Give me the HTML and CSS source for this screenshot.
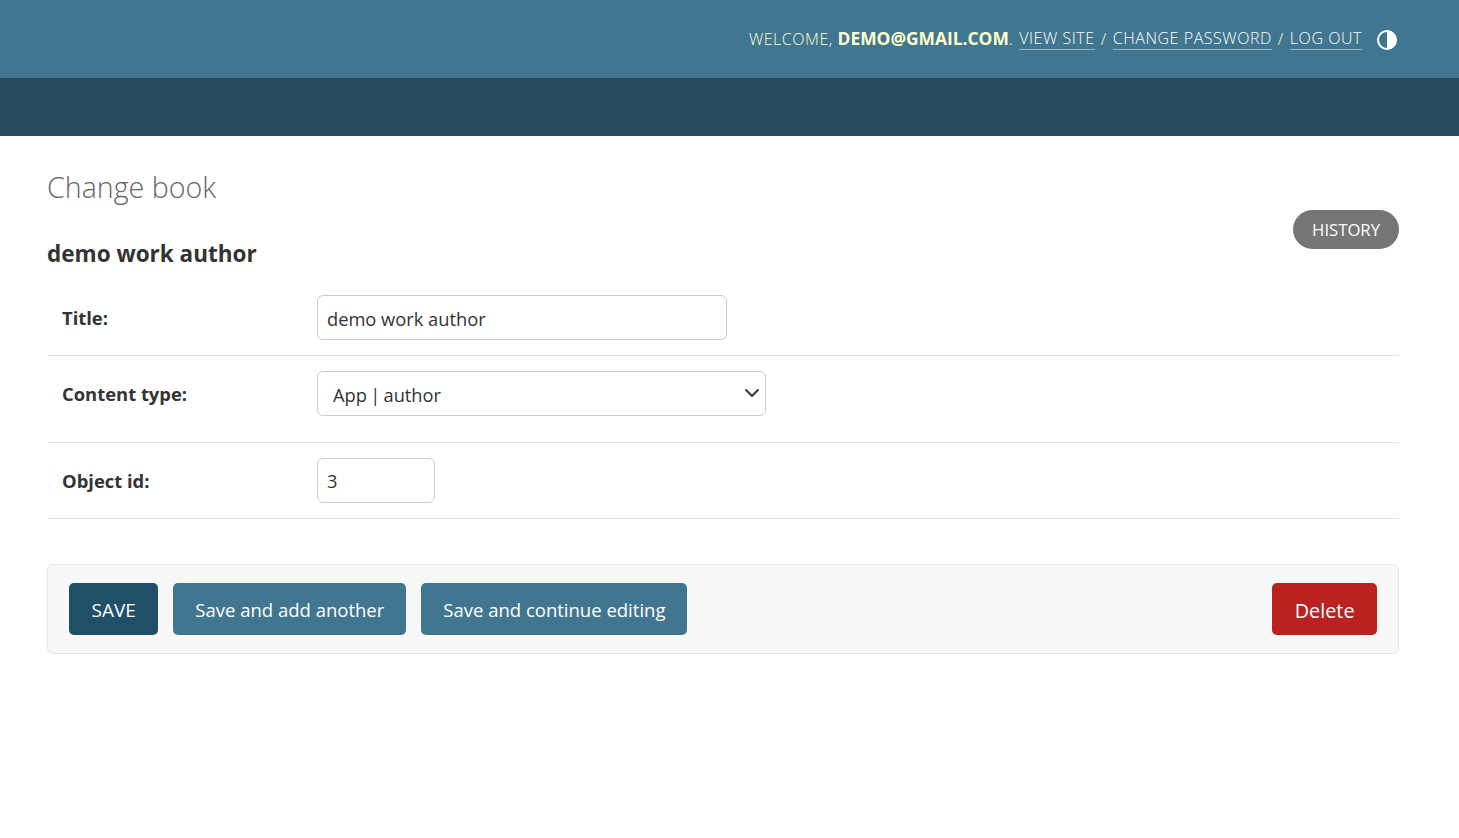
FILE: index.html
```html
<!DOCTYPE html>
<html lang="en">
<head>
<meta charset="utf-8">
<title>Change book</title>
<link rel="stylesheet" href="styles.css">
</head>
<body>
<header class="header">
  <div class="tools">
    <span class="welcome">Welcome, <strong class="user">demo@gmail.com</strong>.</span>
    <a href="#">View site</a><span>/</span><a href="#">Change password</a><span>/</span><a href="#">Log out</a>
    <svg class="theme" viewBox="0 0 20 20" width="20" height="20" aria-hidden="true"><circle cx="10" cy="10" r="9" fill="none" stroke="#fff" stroke-width="2"/><path d="M10 1a9 9 0 0 1 0 18z" fill="#fff"/></svg>
  </div>
</header>
<div class="crumbs"></div>
<main class="content">
  <div class="title-row">
    <div>
      <h1>Change book</h1>
      <h2>demo work author</h2>
    </div>
    <a class="history" href="#">History</a>
  </div>
  <form>
    <div class="row row-title"><label>Title:</label><input class="in in-title" value="demo work author"></div>
    <div class="row row-type"><label>Content type:</label>
      <div class="select"><span>App | author</span>
        <svg viewBox="0 0 16 16" width="16" height="16" aria-hidden="true"><path d="M2 5l6 6 6-6" fill="none" stroke="#343a40" stroke-width="2" stroke-linecap="round" stroke-linejoin="round"/></svg>
      </div>
    </div>
    <div class="row row-id"><label>Object id:</label><input class="in in-id" value="3"></div>
    <div class="submit">
      <button type="button" class="btn btn-save">SAVE</button>
      <button type="button" class="btn">Save and add another</button>
      <button type="button" class="btn">Save and continue editing</button>
      <a class="btn btn-del" href="#">Delete</a>
    </div>
  </form>
</main>
</body>
</html>
```
FILE: styles.css
```css
* { box-sizing: border-box; }
html, body { margin: 0; padding: 0; }
body { background: #fff; color: #333; font-family: "Open Sans", sans-serif; font-size: 18px; height: 838px; overflow: hidden; }
.header { height: 78px; background: #417690; display: flex; justify-content: flex-end; align-items: center; padding: 0 62px 0 40px; }
.tools { display: flex; align-items: center; gap: 6px; color: #ffc; font-size: 16px; font-weight: 300; text-transform: uppercase; letter-spacing: .55px; }
.tools a { color: #fff; text-decoration: none; border-bottom: 1px solid rgba(255,255,255,.45); line-height: 21px; }
.welcome { margin-top: -3px; }
.user { font-size: 17.4px; font-weight: 700; letter-spacing: 0; }
.theme { margin: 2px 0 0 9px; }
.crumbs { height: 58px; background: #264b5d; }
.content { padding: 30px 60px 0 47px; }
.title-row { display: flex; justify-content: space-between; align-items: flex-start; }
h1 { margin: 0; font-size: 28.6px; font-weight: 300; line-height: 42px; color: #666; }
h2 { margin: 31px 0 0; font-size: 22.5px; font-weight: 700; line-height: 30px; color: #333; }
.history { background: #767676; color: #fff; text-transform: uppercase; text-decoration: none; font-size: 16.7px; height: 39px; line-height: 39px; padding: 0 19px; border-radius: 20px; margin-top: 44px; }
.row { display: flex; align-items: flex-start; padding: 15px 15px 0; border-bottom: 1px solid #e2e2e2; }
.row-title { height: 87px; padding-top: 26px; }
.row label { width: 255px; font-weight: 700; font-size: 18.4px; line-height: 46px; }
.in, .select { height: 45px; border: 1px solid #ccc; border-radius: 6px; background: #fff; font: 400 18.3px "Open Sans", sans-serif; color: #333; padding: 2px 9px 0; }
.in-title { width: 410px; }
.in-id { width: 118px; padding-top: 0; }
.row-type { height: 87px; }
.row-id { height: 76px; }
.select { width: 449px; display: flex; align-items: center; justify-content: space-between; word-spacing: -1.5px; padding: 2px 5px 0 15px; }
.select svg { margin-top: -4px; }
.submit { margin-top: 45px; height: 90px; background: #f8f8f8; border: 1px solid #e8e8e8; border-radius: 6px; display: flex; align-items: center; gap: 15px; padding: 0 21px; }
.btn { height: 52px; padding: 0 22px; border: 0; border-radius: 5px; background: #417690; color: #fff; font: 400 18.5px "Open Sans", sans-serif; display: flex; align-items: center; text-decoration: none; }
.btn-save { background: #205067; font-size: 19px; padding: 2px 22.5px 0; }
.btn-del { background: #ba2121; margin-left: auto; font-size: 19.8px; padding: 2px 22.5px 0; }
```
